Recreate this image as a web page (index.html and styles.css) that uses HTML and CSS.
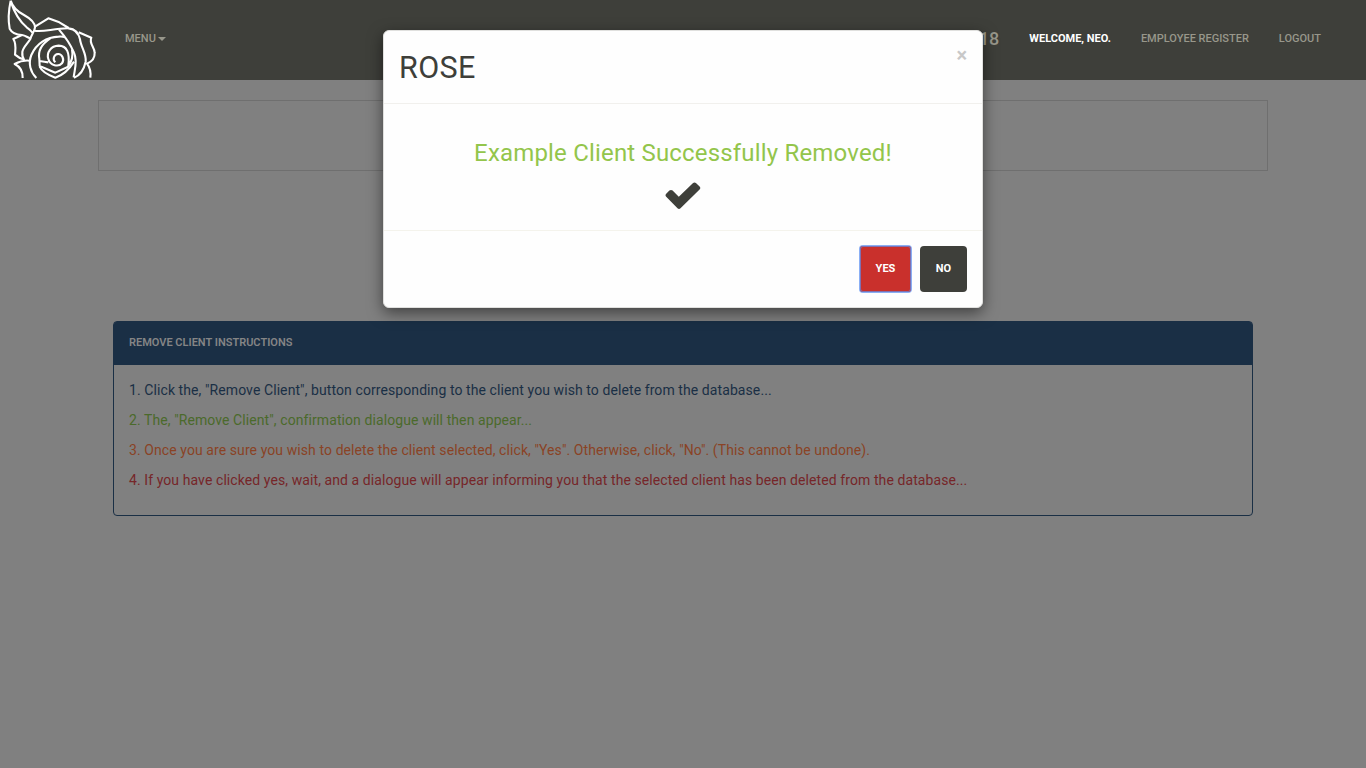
FILE: index.html
```html
<!DOCTYPE html>
<html lang="en">
<head>
<meta charset="utf-8">
<title>ROSE</title>
<link rel="stylesheet" href="styles.css">
</head>
<body>
<nav class="navbar">
  <svg class="logo" viewBox="0 0 300 240" aria-label="Rose">
    <path d="M32 2C27 25 24 60 29 86C35 98 50 104 66 105C76 106 82 112 90 115M32 2C38 22 54 36 72 45C92 56 105 68 105 82C104 94 94 104 91 117C82 132 69 142 67 156C66 168 69 176 73 181M32 4C42 35 55 60 80 82Q92 90 98 99"/>
    <path d="M105 80L145 55L178 67L206 84M103 92C130 98 162 84 206 85C226 87 236 100 240 118C243 142 260 162 257 185C252 208 240 226 222 233"/>
    <path d="M66 105L40 117C50 132 46 148 45 164Q58 175 70 178M90 182C76 180 62 182 44 192C62 201 69 213 68 234"/>
    <path d="M109 234C91 216 84 190 94 165C109 131 140 111 176 110Q196 108 200 119M177 89C197 112 212 135 222 158C234 184 223 211 221 232"/>
    <path d="M151 115C125 132 113 153 118 177L119 198L166 218L203 201Q222 178 216 148M119 183Q134 186 145 187M205 198C210 157 201 138 176 137C152 138 139 158 145 177C151 197 175 202 186 190C195 178 185 161 174 162C161 163 157 179 166 187"/>
    <path d="M236 97L274 113C266 130 284 142 284 158C285 175 276 185 261 191C271 204 273 218 271 233M119 200C126 216 144 225 166 233C188 226 204 214 222 185"/>
  </svg>
  <a class="menu">MENU<span class="caret"></span></a>
  <div class="nav-right">
    <span class="date">18</span>
    <a class="welcome">WELCOME, NEO.</a>
    <a>EMPLOYEE REGISTER</a>
    <a>LOGOUT</a>
  </div>
</nav>
<main class="container">
  <div class="well"></div>
  <section class="panel">
    <h3 class="panel-heading">REMOVE CLIENT INSTRUCTIONS</h3>
    <div class="panel-body">
      <p class="primary">1. Click the, "Remove Client", button corresponding to the client you wish to delete from the database...</p>
      <p class="success">2. The, "Remove Client", confirmation dialogue will then appear...</p>
      <p class="warning">3. Once you are sure you wish to delete the client selected, click, "Yes". Otherwise, click, "No". (This cannot be undone).</p>
      <p class="danger">4. If you have clicked yes, wait, and a dialogue will appear informing you that the selected client has been deleted from the database...</p>
    </div>
  </section>
</main>
<div class="modal" role="dialog">
  <header class="modal-header"><h2>ROSE</h2><button class="close">×</button></header>
  <div class="modal-body">
    <h3>Example Client Successfully Removed!</h3>
    <svg class="check" viewBox="0 0 36 28"><path d="M1.2 11.8L4.4 8.6Q6 7.2 7.6 8.6L13.8 14.8L27.8 1.2Q29.5 -.3 31.2 1.2L34.6 4.5Q36 6 34.6 7.5L15.5 26.2Q14 27.6 12.5 26.2L1.2 14.8Q-.2 13.3 1.2 11.8Z"/></svg>
  </div>
  <footer class="modal-footer">
    <button class="btn btn-yes">YES</button>
    <button class="btn">NO</button>
  </footer>
</div>
</body>
</html>
```
FILE: styles.css
```css
* { box-sizing: border-box; }
body { margin: 0; height: 768px; overflow: hidden; background: #808080; font: 14px/20px Roboto, "Liberation Sans", sans-serif; }
h2, h3, p { margin: 0; }
.navbar { display: flex; align-items: flex-start; height: 80px; background: #3e3f3a; color: #98978b; font-size: 11px; font-weight: 500; line-height: 16px; }
.logo { width: 100px; height: 80px; fill: none; stroke: #fff; stroke-width: 6.3; stroke-linejoin: round; }
.menu { display: flex; align-items: center; gap: 2px; padding: 31px 0 0 25px; }
.caret { border: 4px solid transparent; border-top-color: currentColor; border-bottom: 0; }
.nav-right { display: flex; gap: 30px; margin-left: auto; padding: 31px 45px 0 0; }
.date { font-size: 18px; font-weight: 500; line-height: 16px; }
.welcome { color: #fff; font-weight: 700; }
.container { width: 1170px; margin: 20px auto 0; }
.well { height: 71px; border: 1px solid #6f6f6f; }
.panel { margin: 150px 15px 0; height: 195px; border: 1px solid #1a2f45; border-radius: 4px; }
.panel-heading { height: 43px; padding: 11px 15px; background: #1a2f45; color: #858585; font-size: 11px; font-weight: 600; border-radius: 2px 2px 0 0; }
.panel-body { display: grid; gap: 10px; padding: 15px; letter-spacing: .085px; }
.primary { color: #1a2f45; }
.success { color: #4b6a2b; }
.warning { color: #8a4325; }
.danger { color: #762629; }
.modal { position: absolute; left: 383px; top: 30px; width: 600px; height: 278px; background: #fefefe; border: 1px solid #e0e0de; border-radius: 6px; box-shadow: 0 5px 15px rgba(0,0,0,.5); color: #3e3f3a; }
.modal-header { display: flex; justify-content: space-between; height: 73px; padding: 14px 15px; border-bottom: 1px solid #f1f0ed; }
.modal-header h2 { font-size: 30.5px; font-weight: 400; line-height: 45px; letter-spacing: .4px; }
.close { border: 0; padding: 0; background: none; color: #c8c8c8; font: 700 20px/20px Roboto, sans-serif; height: 20px; }
.modal-body { display: flex; flex-direction: column; align-items: center; height: 127px; padding-top: 35px; border-bottom: 1px solid #f4f3ec; }
.modal-body h3 { color: #93c54b; font-size: 24px; font-weight: 400; line-height: 28px; letter-spacing: .18px; }
.check { width: 36px; height: 28px; margin-top: 15px; fill: #3e3f3a; }
.modal-footer { display: flex; justify-content: flex-end; gap: 9px; padding: 15px; }
.btn { width: 47px; height: 46px; padding: 0; border: 0; border-radius: 4px; background: #3e3f3a; color: #fff; font: 700 11px/16px Roboto, sans-serif; }
.btn-yes { width: 51px; background: #c9302c; box-shadow: 0 0 0 1px #8aaff5, inset 0 0 0 1px #8070b0; border-radius: 3px; }
```
